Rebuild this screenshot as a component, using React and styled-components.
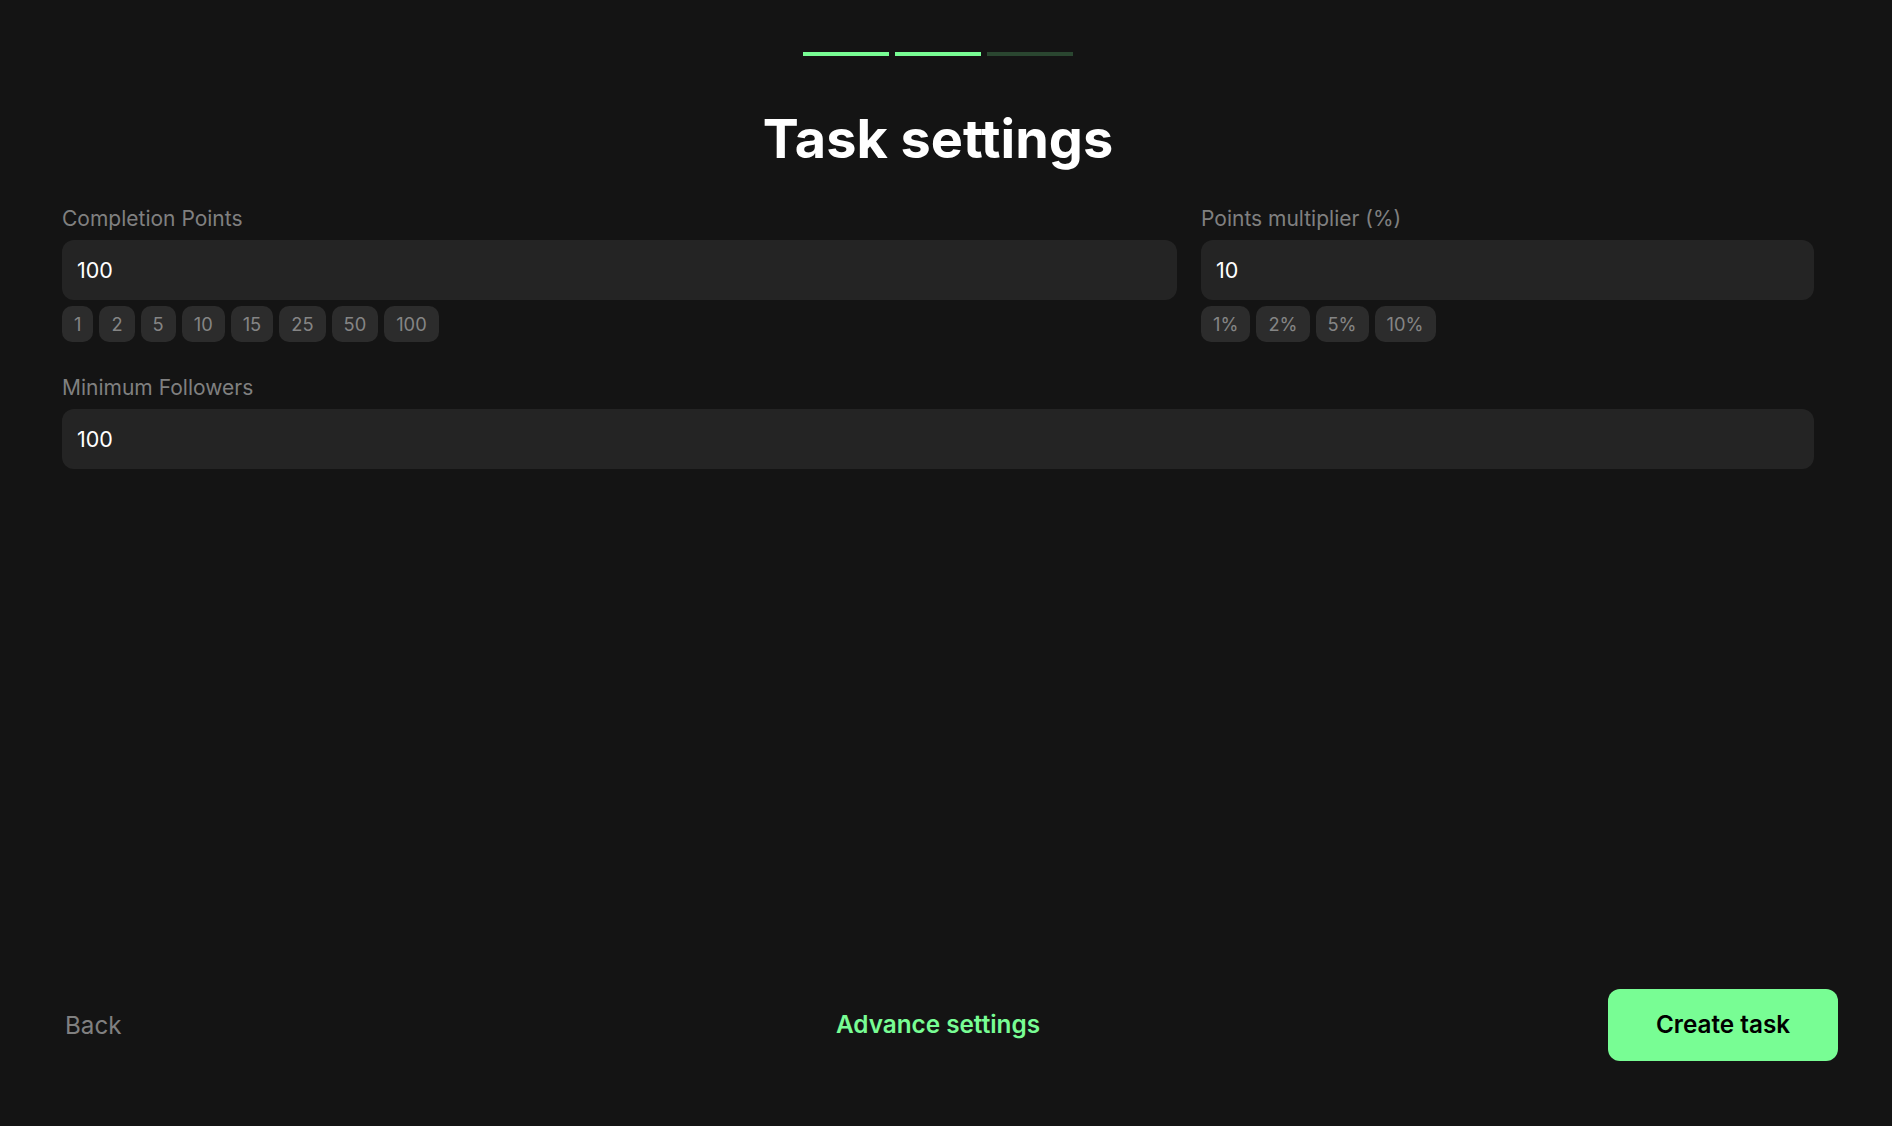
import React from 'react'
import styled, { createGlobalStyle } from 'styled-components'

const GlobalStyle = createGlobalStyle`
    html, body {
        margin: 0;
        padding: 0;
        background: #141414;
    }
    * {
        box-sizing: border-box;
    }
`

const Page = styled.div`
    width: 1892px;
    height: 1126px;
    padding: 52px 16px 0 0;
    display: flex;
    flex-direction: column;
    background: #141414;
    font-family: Inter, "Liberation Sans", sans-serif;
    overflow: hidden;
`

const Progress = styled.div`
    display: flex;
    justify-content: center;
    gap: 6px;
`

const Step = styled.div`
    width: 86px;
    height: 4px;
    background: ${p => (p.$done ? '#78fd94' : '#2a4630')};
`

const Title = styled.h1`
    margin: 49px 0 0;
    font-size: 54px;
    line-height: 68px;
    font-weight: 700;
    color: #fff;
    text-align: center;
`

const Form = styled.div`
    flex: 1;
    margin-top: 33px;
    padding: 0 62px;
    display: flex;
    flex-direction: column;
    gap: 33px;
`

const Row = styled.div`
    display: grid;
    grid-template-columns: 1fr 613px;
    gap: 24px;
`

const Field = styled.div`
    display: flex;
    flex-direction: column;
`

const Label = styled.label`
    font-size: 21px;
    line-height: 26px;
    color: #808080;
    margin-bottom: 8px;
`

const Input = styled.div`
    height: 60px;
    padding: 0 15px;
    display: flex;
    align-items: center;
    border-radius: 12px;
    background: #242424;
    color: #fff;
    font-size: 21.5px;
`

const Chips = styled.div`
    display: flex;
    gap: 6px;
    margin-top: 6px;
`

const Chip = styled.div`
    height: 36px;
    padding: 0 12px;
    display: flex;
    align-items: center;
    border-radius: 10px;
    background: #2c2c2c;
    color: #858585;
    font-size: 18.3px;
`

const Footer = styled.div`
    height: 72px;
    margin-bottom: 65px;
    padding: 0 38px;
    display: grid;
    grid-template-columns: 1fr auto 1fr;
    align-items: center;
`

const BackLink = styled.div`
    margin-left: 27px;
    font-size: 24.2px;
    color: #808080;
`

const AdvanceLink = styled.div`
    margin-bottom: 2px;
    font-size: 24.3px;
    font-weight: 600;
    color: #78fd94;
`

const CreateButton = styled.div`
    justify-self: end;
    width: 230px;
    height: 72px;
    padding-bottom: 2px;
    display: flex;
    align-items: center;
    justify-content: center;
    border-radius: 12px;
    background: #78fd94;
    color: #000;
    font-size: 24.3px;
    font-weight: 600;
`

const points = ['1', '2', '5', '10', '15', '25', '50', '100']
const multipliers = ['1%', '2%', '5%', '10%']

const App = () => {
    return (
        <Page>
            <GlobalStyle />
            <Progress>
                <Step $done />
                <Step $done />
                <Step />
            </Progress>
            <Title>Task settings</Title>
            <Form>
                <Row>
                    <Field>
                        <Label>Completion Points</Label>
                        <Input>100</Input>
                        <Chips>
                            {points.map(v => <Chip key={v}>{v}</Chip>)}
                        </Chips>
                    </Field>
                    <Field>
                        <Label>Points multiplier (%)</Label>
                        <Input>10</Input>
                        <Chips>
                            {multipliers.map(v => <Chip key={v}>{v}</Chip>)}
                        </Chips>
                    </Field>
                </Row>
                <Field>
                    <Label>Minimum Followers</Label>
                    <Input>100</Input>
                </Field>
            </Form>
            <Footer>
                <BackLink>Back</BackLink>
                <AdvanceLink>Advance settings</AdvanceLink>
                <CreateButton>Create task</CreateButton>
            </Footer>
        </Page>
    )
}

export default App
